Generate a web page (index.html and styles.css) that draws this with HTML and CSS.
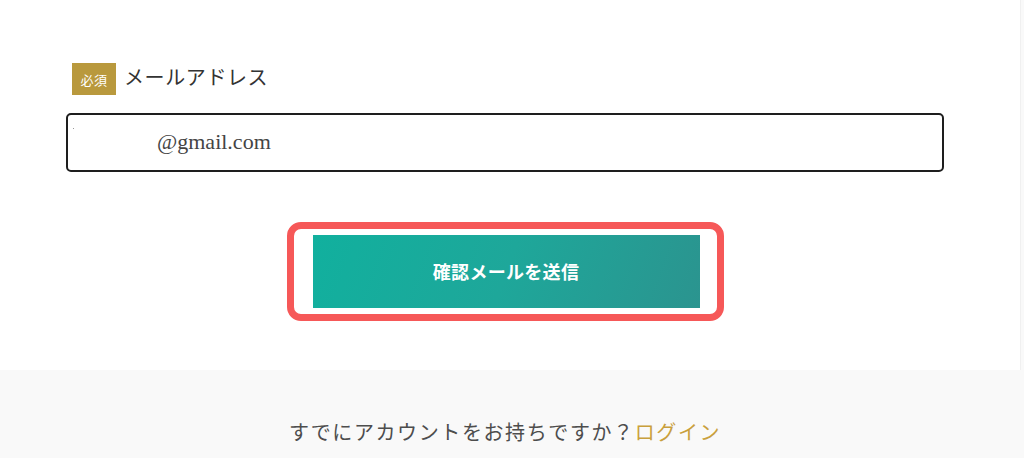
FILE: index.html
```html
<!DOCTYPE html>
<html lang="ja">
<head>
<meta charset="utf-8">
<title>メールアドレス登録</title>
<link rel="stylesheet" href="styles.css">
</head>
<body>
<div class="page">
  <section class="form-area">
    <div class="form-inner">
      <div class="field-label">
        <span class="badge">必須</span>
        <span class="label-text">メールアドレス</span>
      </div>
      <div class="input-box">
        <span class="input-dot"></span>
        <span class="input-value">@gmail.com</span>
      </div>
      <div class="highlight">
        <button class="submit-btn" type="button">確認メールを送信</button>
      </div>
    </div>
  </section>
  <section class="login-area">
    <p class="login-text">すでにアカウントをお持ちですか？<a class="login-link" href="#">ログイン</a></p>
  </section>
</div>
</body>
</html>
```

FILE: styles.css
```css
html, body {
  margin: 0;
  padding: 0;
  background: #f9f9f9;
}

body {
  width: 1024px;
  height: 458px;
  overflow: hidden;
  font-family: "Liberation Serif", "Noto Sans CJK JP", serif;
}

.page {
  display: flex;
  flex-direction: column;
}

.form-area {
  background: #ffffff;
  width: 1021px;
  height: 370px;
  box-sizing: border-box;
  padding-top: 63px;
  border-right: 1px solid #f0f0f0;
}

.form-inner {
  margin-left: 66px;
  width: 878px;
  display: flex;
  flex-direction: column;
}

.field-label {
  display: flex;
  align-items: center;
  gap: 8px;
  margin-left: 6px;
  height: 32px;
}

.badge {
  width: 44px;
  height: 32px;
  background: #b9993d;
  color: #ffffff;
  font-family: "Noto Sans CJK JP", sans-serif;
  font-size: 13px;
  display: flex;
  align-items: center;
  justify-content: center;
  letter-spacing: 0.5px;
}

.label-text {
  font-family: "Noto Sans CJK JP", sans-serif;
  font-size: 20px;
  letter-spacing: 0.6px;
  color: #333333;
  line-height: 28px;
  margin-top: -4px;
}

.input-box {
  position: relative;
  margin-top: 18px;
  height: 59px;
  box-sizing: border-box;
  border: 2px solid #1e1e1e;
  border-radius: 5px;
  display: flex;
  align-items: center;
  padding-left: 89px;
  padding-bottom: 2px;
}

.input-dot {
  position: absolute;
  left: 5px;
  top: 13px;
  width: 1px;
  height: 1px;
  background: #999999;
}

.input-value {
  font-family: "Liberation Serif", serif;
  font-size: 22px;
  color: #444444;
}

.highlight {
  margin: 50px auto 0 auto;
  width: 437px;
  height: 99px;
  box-sizing: border-box;
  border: 7px solid #f65858;
  border-radius: 14px;
  padding: 6px 17px 6px 19px;
  display: flex;
}

.submit-btn {
  width: 387px;
  height: 73px;
  border: none;
  margin: 0;
  padding: 0 0 2px 0;
  background: linear-gradient(110deg, #11b09e 0%, #1ea79a 50%, #2b948f 100%);
  color: #ffffff;
  font-family: "Noto Sans CJK JP", sans-serif;
  font-weight: 700;
  font-size: 18px;
  letter-spacing: 0.3px;
  cursor: pointer;
}

.login-area {
  background: #f9f9f9;
  height: 88px;
  box-sizing: border-box;
  padding-top: 47px;
}

.login-text {
  margin: 0;
  text-align: center;
  font-family: "Noto Sans CJK JP", sans-serif;
  font-size: 20px;
  letter-spacing: 1.6px;
  line-height: 30px;
  color: #4d4d4d;
  padding-right: 14px;
}

.login-link {
  color: #c9a03c;
  text-decoration: none;
}
```
